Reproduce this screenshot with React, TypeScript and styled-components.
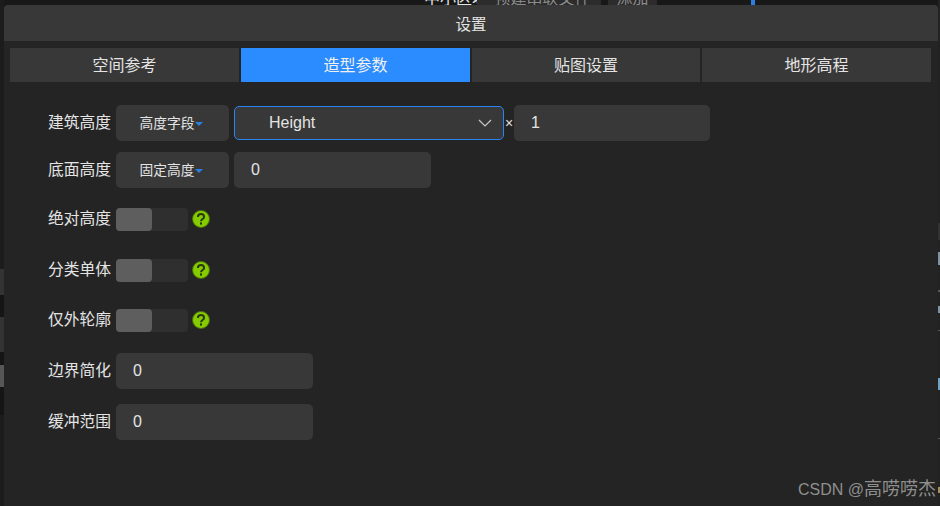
import { createGlobalStyle, styled } from "styled-components";

const GlobalStyle = createGlobalStyle`
  html, body {
    margin: 0;
    padding: 0;
    background: #181818;
  }
  * {
    box-sizing: border-box;
  }
`;

const Page = styled.div`
  position: relative;
  width: 940px;
  height: 506px;
  overflow: hidden;
  padding: 5px 2px 0 4px;
  font-family: "Liberation Sans", "Noto Sans CJK SC", sans-serif;
  color: #e4e4e4;
`;

const BackChip = styled.div<{ $left: number; $width: number; $pad?: number }>`
  position: absolute;
  top: -8px;
  left: ${(p) => p.$left}px;
  width: ${(p) => p.$width}px;
  height: 13px;
  padding-left: ${(p) => p.$pad ?? 0}px;
  font-size: 16px;
  line-height: 14px;
  text-align: center;
  overflow: hidden;
  white-space: nowrap;
  background: #2c2c2c;
  color: #8a8a8a;
`;

const BackLabel = styled.div`
  position: absolute;
  top: -8px;
  left: 424px;
  font-size: 16px;
  line-height: 14px;
  color: #e4e4e4;
`;

const BackMark = styled.div`
  position: absolute;
  top: 0;
  left: 751px;
  width: 4px;
  height: 5px;
  background: #2b7fe0;
`;

// bits of the page behind the dialog that show along its left and right edge
const EdgeBlock = styled.div<{ $side: "left" | "right"; $top: number; $height: number; $color: string }>`
  position: absolute;
  ${(p) => p.$side}: 0;
  top: ${(p) => p.$top}px;
  width: ${(p) => (p.$side === "left" ? 4 : 2)}px;
  height: ${(p) => p.$height}px;
  background: ${(p) => p.$color};
`;

const edgeBlocks = [
  { side: "left", top: 0, height: 506, color: "#1c1c1c" },
  { side: "left", top: 269, height: 26, color: "#333333" },
  { side: "left", top: 295, height: 22, color: "#151515" },
  { side: "left", top: 317, height: 35, color: "#333333" },
  { side: "left", top: 352, height: 13, color: "#151515" },
  { side: "left", top: 365, height: 22, color: "#565656" },
  { side: "left", top: 387, height: 28, color: "#151515" },
  { side: "right", top: 0, height: 506, color: "#222222" },
  { side: "right", top: 223, height: 17, color: "#333333" },
  { side: "right", top: 252, height: 13, color: "#7f93a0" },
  { side: "right", top: 290, height: 2, color: "#5a5a5a" },
  { side: "right", top: 306, height: 7, color: "#7f93a0" },
  { side: "right", top: 330, height: 1, color: "#5a5a5a" },
  { side: "right", top: 378, height: 12, color: "#6f9fc0" },
  { side: "right", top: 438, height: 1, color: "#5a5a5a" },
  { side: "right", top: 487, height: 6, color: "#a09060" },
] as const;

const Dialog = styled.div`
  position: relative;
  height: 100%;
  background: #242424;
  border-radius: 4px 4px 0 0;
`;

const Header = styled.div`
  height: 36px;
  display: flex;
  align-items: center;
  justify-content: center;
  background: #383838;
  border-radius: 4px 4px 0 0;
  font-size: 15.5px;
`;

const Tabs = styled.div`
  display: flex;
  gap: 2px;
  padding: 7px 0 0 6px;
`;

const Tab = styled.div<{ $active?: boolean; $width?: number }>`
  width: ${(p) => p.$width ?? 229}px;
  height: 34px;
  display: flex;
  align-items: center;
  justify-content: center;
  padding-bottom: 3px;
  font-size: 16px;
  background: ${(p) => (p.$active ? "#2a8cff" : "#383838")};
  color: ${(p) => (p.$active ? "#f0f0f0" : "#e4e4e4")};
`;

const Form = styled.div`
  padding: 23px 0 0 44px;
`;

const Row = styled.div<{ $top?: number }>`
  height: 36px;
  margin-top: ${(p) => p.$top ?? 0}px;
  display: flex;
  align-items: center;
`;

const Label = styled.div`
  width: 63px;
  margin-right: 5px;
  padding-bottom: 3px;
  font-size: 15.75px;
  white-space: nowrap;
`;

const ModeButton = styled.div`
  width: 113px;
  height: 36px;
  margin-right: 5px;
  display: flex;
  align-items: center;
  justify-content: center;
  padding: 0 3px 3px 0;
  border-radius: 5px;
  background: #383838;
  font-size: 13.75px;
`;

const Caret = styled.span`
  width: 0;
  height: 0;
  margin-top: 5px;
  border-left: 4px solid transparent;
  border-right: 4px solid transparent;
  border-top: 4px solid #2a7fe0;
`;

const Select = styled.div`
  width: 270px;
  height: 34px;
  display: flex;
  align-items: center;
  justify-content: space-between;
  padding: 0 11px 0 34px;
  border: 1px solid #2a85f0;
  border-radius: 5px;
  background: #383838;
  font-size: 16px;
`;

const Times = styled.div`
  width: 10px;
  text-align: center;
  font-size: 14px;
`;

const Input = styled.div<{ $width: number }>`
  width: ${(p) => p.$width}px;
  height: 36px;
  display: flex;
  align-items: center;
  padding-left: 17px;
  border-radius: 5px;
  background: #383838;
  font-size: 16px;
`;

const SwitchTrack = styled.div`
  width: 72px;
  height: 23px;
  border-radius: 4px;
  background: #2f2f2f;
`;

const SwitchKnob = styled.div`
  width: 36px;
  height: 100%;
  border-radius: 4px;
  background: #5e5e5e;
`;

const HelpIcon = styled.svg`
  width: 18px;
  height: 18px;
  margin-left: 4px;
`;

function Help() {
  return (
    <HelpIcon viewBox="0 0 18 18">
      <circle cx="9" cy="9" r="8.5" fill="#84cc00" stroke="#4a6a10" strokeWidth="1" />
      <path
        d="M5.9 7a3.1 3.1 0 0 1 6.2 0c0 2-3.1 2.1-3.1 4.2"
        fill="none"
        stroke="#2c3610"
        strokeWidth="2"
      />
      <rect x="8" y="12.4" width="2" height="2.2" fill="#2c3610" />
    </HelpIcon>
  );
}

const Chevron = styled.svg`
  width: 14px;
  height: 8px;
`;

const Watermark = styled.div`
  position: absolute;
  right: 4px;
  bottom: 5px;
  font-size: 16px;
  line-height: 22px;
  color: #8f8f8f;
  white-space: nowrap;
`;

const WatermarkName = styled.span`
  font-size: 18px;
`;

const toggles = [
  { label: "绝对高度", top: 13 },
  { label: "分类单体", top: 15 },
  { label: "仅外轮廓", top: 14 },
];

export default function App() {
  return (
    <Page>
      <GlobalStyle />
      {edgeBlocks.map((b) => (
        <EdgeBlock key={`${b.side}${b.top}`} $side={b.side} $top={b.top} $height={b.height} $color={b.color} />
      ))}
      <BackLabel>中小区域</BackLabel>
      <BackChip $left={477} $width={124} $pad={7}>预建串联文件</BackChip>
      <BackChip $left={608} $width={49}>添加</BackChip>
      <BackMark />
      <Dialog>
        <Header>设置</Header>
        <Tabs>
          <Tab>空间参考</Tab>
          <Tab $active>造型参数</Tab>
          <Tab $width={228}>贴图设置</Tab>
          <Tab>地形高程</Tab>
        </Tabs>
        <Form>
          <Row>
            <Label>建筑高度</Label>
            <ModeButton>
              高度字段
              <Caret />
            </ModeButton>
            <Select>
              Height
              <Chevron viewBox="0 0 14 8">
                <path d="M1 1l6 6 6-6" fill="none" stroke="#c8c8c8" strokeWidth="1.2" />
              </Chevron>
            </Select>
            <Times>×</Times>
            <Input $width={196}>1</Input>
          </Row>
          <Row $top={11}>
            <Label>底面高度</Label>
            <ModeButton>
              固定高度
              <Caret />
            </ModeButton>
            <Input $width={197}>0</Input>
          </Row>
          {toggles.map((t) => (
            <Row key={t.label} $top={t.top}>
              <Label>{t.label}</Label>
              <SwitchTrack>
                <SwitchKnob />
              </SwitchTrack>
              <Help />
            </Row>
          ))}
          <Row $top={15}>
            <Label>边界简化</Label>
            <Input $width={197}>0</Input>
          </Row>
          <Row $top={15}>
            <Label>缓冲范围</Label>
            <Input $width={197}>0</Input>
          </Row>
        </Form>
      </Dialog>
      <Watermark>
        CSDN @<WatermarkName>高唠唠杰</WatermarkName>
      </Watermark>
    </Page>
  );
}
